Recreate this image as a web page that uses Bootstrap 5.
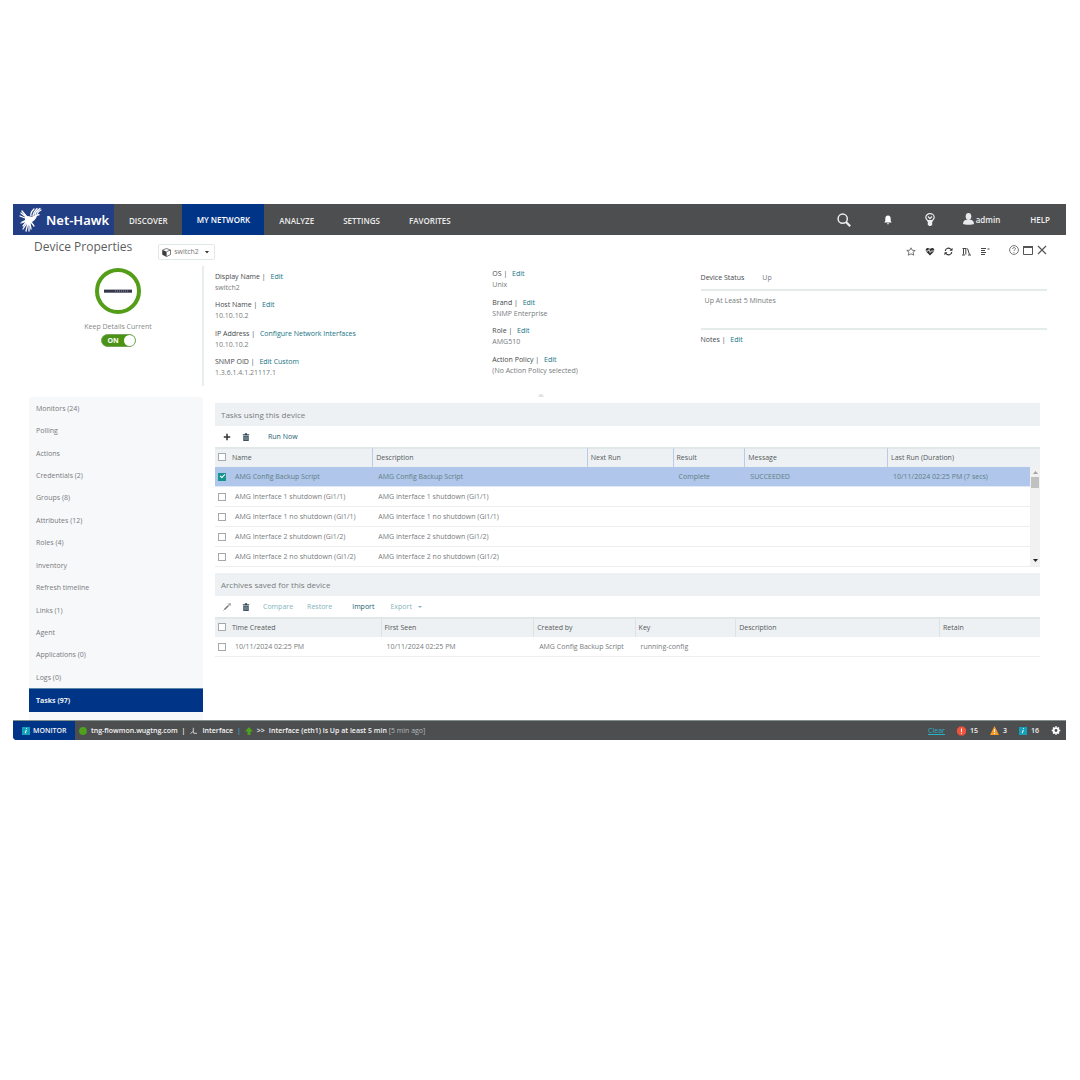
<!DOCTYPE html>
<html lang="en">
<head>
<meta charset="utf-8">
<meta name="viewport" content="width=device-width, initial-scale=1">
<title>Device Properties</title>
<link href="https://cdn.jsdelivr.net/npm/bootstrap@5.3.0/dist/css/bootstrap.min.css" rel="stylesheet">
<style>
body{font-family:"Open Sans","Noto Sans",sans-serif;font-size:7px;line-height:11px;color:#777b7d;background:#fff}
a{text-decoration:none;color:#16707f;font-weight:500}
svg{display:block;flex:none}
.shell{margin:204px 14px 0 13px}
.topbar{background:#4d4e50;height:31px;color:#eee}
.brand{background:#223e84;width:101px;padding-left:6px;gap:4px;color:#fff;font:600 13px/20px "Noto Sans",sans-serif;white-space:nowrap}
.topbar a.menu-item{color:#ececec;font-size:8px;font-weight:600;padding:1px 14px 0 15px;display:flex;align-items:center}
.topbar a.menu-item.current{background:#003487;color:#fff;padding-top:0}
.tools{gap:33px;padding-right:16px}
.tools button,.plain{background:none;border:0;padding:0;color:inherit;font-size:7px;line-height:11px}
.tools .acct{gap:2px;margin:0 -3px 0 -5px;font-size:8px;font-weight:600}
.tools .help{color:#eee;font-size:8px;font-weight:600}
.titlebar{height:31px;padding:0 19px 0 21px}
.titlebar h1{font-size:12px;line-height:16px;margin:4px 26px 0 0;color:#5b5e60;font-weight:400}
.picker{position:relative;border:1px solid #dfe9e9;border-radius:2px;height:16px;width:57px;margin-top:9px}
.picker svg{position:absolute;top:3px;pointer-events:none}
.picker .cube{left:3px}.picker .tri{right:5px;top:6px}
.picker select{appearance:none;border:0;background:transparent;width:100%;height:14px;padding:0 0 0 15px;font-size:7px;line-height:14px;color:#777;display:block}
.acts{gap:9px;padding-top:12px;color:#333}
.wins{gap:4px;margin-left:10px;margin-top:-3px;color:#555}
.info{padding:0 19px 0 16px;min-height:120px}
.side{width:174px}
.badge-col{width:175px;border-right:2px solid #e8eeee;padding-top:2px;padding-left:5px}
.ring{width:46px;height:46px;border:4px solid #549d18;border-radius:50%}
.toggle-label{margin:7px 0 2px;color:#85898b}
.toggle{appearance:none;width:35px;height:13px;border-radius:7px;background:#4a9317;border:1px solid #74a45a;margin:0;display:block;position:relative}
.toggle-wrap{position:relative}
.toggle-wrap span{position:absolute;left:7px;top:1px;font-weight:700;color:#fff;pointer-events:none}
.toggle::after{content:"";position:absolute;right:0;top:0;width:11px;height:11px;border-radius:50%;background:#fff}
.facts{display:grid;grid-template-columns:277fr 208fr 346fr;padding-left:11px}
.facts b{font-weight:500;color:#44484a}
.fa1{padding:5px 0 8px}.fa2{padding:2px 0 10px}.fa3{padding-top:6px}
.state{gap:18px;height:17px}
.rule{border-top:2px solid #e4ebeb}
.fa3 .quiet{height:39px;padding:4px}
.fa3 .notes{padding-top:4px}
.facts a{margin-left:3px;color:#147384}
.body-row{padding-left:16px;margin-top:11px}
.menu{background:#f7f8fa;padding-bottom:8px;height:323px}
.menu a{flex:1 1 0;display:flex;align-items:center;padding-left:7px;color:#777b7d;font-weight:400}
.menu a.current{background:#003487;color:#e8f0f4;font-weight:700;border-top:1px solid #5b86a8}
.main{padding:6px 26px 0 12px;position:relative}
.collapse-tri{position:absolute;left:335px;top:-4px}
.band{background:#edf1f3;height:23px;padding:6px;color:#777c7e}
.band h2{font-size:8px;line-height:11px;font-weight:400;margin:0}
.grid-wrap{margin-bottom:6px}
.bar{height:21px;padding-left:8px;color:#1b6070}
.bar .off{color:#85b3bb}
.bar button{font-weight:500}
.bar .del{margin:0 18px 0 11px;color:#2f4a58}
.bar .del2{margin:0 13px 0 10px;color:#2f4a58}
.bar .rest{margin:0 20px 0 14px}
.bar .exp{gap:6px;margin-left:16px}
table.grid{table-layout:fixed;width:100%;border-collapse:separate;border-spacing:0}
.grid th{background:#edf1f3;color:#55595b;font-weight:500;height:20px;padding:0 0 2px 3px;border-top:2px solid #e0e8e8;border-left:1px solid #dbe3e6}
.grid.blue th{border-left-color:#b9cbe9}
.grid th:first-child,.grid th:nth-child(2){border-left:0}
.grid td{height:20px;padding:0 0 0 6px;border-bottom:1px solid #eceeef;white-space:nowrap}
.grid th:nth-child(2){padding-left:0}.grid td:nth-child(2){padding-left:3px}
.grid th:first-child,.grid td:first-child{padding-left:3px}
.grid tr.sel td{background:#b0c6ea;color:#5f8185;border-bottom-color:#dfe9f8}
.tick{appearance:none;width:8px;height:8px;border:1px solid #a4a9ab;background:#fff;margin:0;display:block}
.tick:checked{background:#16958f;border-color:#16958f;position:relative}
.tick:checked::after{content:"";position:absolute;left:1px;top:0;width:5px;height:3px;border:solid #fff;border-width:0 0 1px 1px;transform:rotate(-45deg)}
.scroller{position:absolute;right:0;top:20px;bottom:1px;width:10px;background:#f1f1f1;padding:4px 0}
.scroller i{width:8px;height:11px;background:#c1c1c1;margin:3px 0 auto}
.statusbar{background:#4d4e50;height:20px;color:#f4f4f4;border-top:1px solid #83908d;border-bottom-left-radius:4px;overflow:hidden;font-weight:600;padding-right:5px}
.mon{background:#003487;width:62px;padding-left:9px;gap:3px;height:100%}
.feed{gap:4px;padding-left:4px}
.feed .ago{color:#b5b8b9;font-weight:500}
.feed .sep{color:#2ab0c9}
.counts{gap:12px}
.counts span{gap:4px}
.statusbar .clear{color:#25b3c8;text-decoration:underline}
</style>
</head>
<body>
<svg width="0" height="0" class="position-absolute"><defs>
<symbol id="note" viewBox="0 0 8 8"><path fill="#13a0bb" d="M0 0h8v8H0z"/><path stroke="#fff" d="M3.3 6.3 4.3 3M4.6 1.2 4.4 2.1"/></symbol>
<symbol id="trash" viewBox="0 0 8 8"><path fill="currentColor" d="M.8 1.2h2.1V.3h2.2v.9h2.1v1H.8zM1.3 2.8h5.4V8H1.3z"/><path stroke="#fff" stroke-width=".4" d="M2.8 3.5v3.7M4 3.5v3.7M5.2 3.5v3.7"/></symbol>
</defs></svg>
<div class="shell">
<header class="topbar d-flex">
  <div class="brand d-flex align-items-center">
    <svg width="23" height="26" viewBox="0 0 23 26" fill="none" stroke="#fff" stroke-width="1.3" stroke-linecap="round">
      <path fill="#fff" stroke="none" d="M6 10 9 9l4 1c2-1 4-3 7-3l1 1-3 1c-1 3-3 5-5 6l-2 2c-2 0-4-1-5-2l-4 0 4-2z"/>
      <path d="M12 9c-1-3 1-5 3-7M14 9c0-3 2-5 4-7.500M16 8c0-3 2-4 5-6.500M18 7c1-2 2-3 4-4M8 10 3 4M7 10 2 6M6 11 1 9M5 15l-3 1M7 15l-3 4M8 16l-4 6M9 16l-2 8M10 16l0 8M11 16l1 6M12 15l3 4"/>
    </svg>Net-Hawk
  </div>
  <nav class="d-flex">
    <a class="menu-item" href="#">DISCOVER</a><a class="menu-item current" href="#">MY NETWORK</a><a class="menu-item" href="#">ANALYZE</a><a class="menu-item" href="#">SETTINGS</a><a class="menu-item" href="#">FAVORITES</a>
  </nav>
  <div class="tools d-flex align-items-center ms-auto">
    <button aria-label="Search"><svg width="14" height="14" viewBox="0 0 14 14" fill="none" stroke="#eee"><circle cx="5.7" cy="5.7" r="4.6" stroke-width="1.5"/><path stroke-width="2.2" d="m9 9 4.2 4.2"/></svg></button>
    <button aria-label="Alerts"><svg width="8" height="10" viewBox="0 0 8 10" fill="#fff"><path d="M4 .5C2 .5 1.3 2 1.3 3.5V6L.3 7.5h7.4L6.7 6V3.5C6.7 2 6 .5 4 .5zM2.9 8.200h2.200L4 9.700z"/></svg></button>
    <button aria-label="Tips"><svg width="10" height="13" viewBox="0 0 10 13"><path fill="none" stroke="#eee" stroke-width="1.2" d="M3 8.500C2.500 7 .8 6.300.8 4.300a4.200 3.700 0 0 1 8.400 0c0 2-1.700 2.700-2.200 4.200M3 3.500l2 2.200 2-2.200"/><path fill="#eee" d="M2.800 7h4.400v4.500L6 13H4l-1.200-1.500z"/></svg></button>
    <button class="acct d-flex align-items-center"><svg width="11" height="13" viewBox="0 0 11 13" fill="#e6eaea"><ellipse cx="5.5" cy="3.5" rx="2.8" ry="3.4"/><path d="M0 11c0-3 2-4 3.500-4.200h4C9 7 11 8 11 11c-1 1-10 1-11 0z"/></svg>admin</button>
    <a href="#" class="help">HELP</a>
  </div>
</header>

<div class="titlebar d-flex align-items-start">
  <h1>Device Properties</h1>
  <div class="picker"><svg class="cube" width="9" height="9" viewBox="0 0 9 9"><path fill="#fff" stroke="#444" stroke-width=".7" d="m.6 2 4-1.500 3.900 1.500v4.500L4.600 8.600.6 6.600z"/><path fill="#3b3b3b" d="m.6 2 4 1.700v4.900l-4-2z"/><path stroke="#444" stroke-width=".7" d="m4.600 3.700 3.900-1.700"/></svg>
    <select aria-label="Device"><option>switch2</option></select>
    <svg class="tri" width="4" height="3" viewBox="0 0 4 3"><path fill="#333" d="M0 0h4L2 2.500z"/></svg></div>
  <div class="acts d-flex align-items-center ms-auto">
    <button class="plain" aria-label="Favorite"><svg width="10" height="9" viewBox="0 0 10 9"><path fill="none" stroke="#555" stroke-width=".8" d="m5 .8 1.200 2.400 3 .3L7 5.200l.8 3L5 6.800 2.200 8.200l.8-3L.8 3.500l3-.3z"/></svg></button>
    <button class="plain" aria-label="Health"><svg width="10" height="9" viewBox="0 0 10 9"><path fill="#333" d="M5 8.500 1.500 5C0 3.500.8 1 2.800 1 4 1 5 2 5 2s1-1 2.200-1c2 0 2.800 2.500 1.300 4z"/><path fill="none" stroke="#fff" stroke-width=".8" d="M.5 4H3l1-1.500L5.200 5.500 6.200 4h3.300"/></svg></button>
    <button class="plain" aria-label="Refresh"><svg width="9" height="9" viewBox="0 0 9 9" fill="none" stroke="#333" stroke-width="1.2"><path d="M1.200 4A3.200 3.200 0 0 1 7 2.500M7.800 5A3.200 3.200 0 0 1 2 6.500"/><path fill="#333" stroke="none" d="M8.500.8v3H5.500zM.5 8.200v-3h3z"/></svg></button>
    <button class="plain" aria-label="Library"><svg width="9" height="9" viewBox="0 0 9 9" fill="none" stroke="#444"><path d="M1.500 1.500v6M3.800 1.500v6M5.500 1.500l2 6M0 8h3M.5 1.500h4M6 8h3"/></svg></button>
    <button class="plain" aria-label="List"><svg width="10" height="9" viewBox="0 0 10 9" fill="none" stroke="#444"><path d="M1 1.500h5M1 3.500h4M1 5.500h5M1 7.500h4M7.500 2h2"/></svg></button>
    <div class="wins d-flex align-items-center">
      <button class="plain" aria-label="Help"><svg width="10" height="10" viewBox="0 0 10 10" fill="none" stroke="#666" stroke-width=".9"><circle cx="5" cy="5" r="4.4"/><path d="M3.600 4c0-2 2.900-1.700 2.900-.3C6.500 4.700 5 4.800 5 6M5 6.900v1"/></svg></button>
      <button class="plain" aria-label="Maximize"><svg width="10" height="9" viewBox="0 0 10 9"><path fill="none" stroke="#555" d="M.5.5h9v8h-9z"/><path fill="#555" d="M0 0h10v2H0z"/></svg></button>
      <button class="plain" aria-label="Close"><svg width="10" height="10" viewBox="0 0 10 10"><path stroke="#555" stroke-width="1.2" d="m1 1 8 8M9 1 1 9"/></svg></button>
    </div>
  </div>
</div>

<section class="info d-flex">
  <div class="badge-col d-flex flex-column align-items-center">
    <div class="ring d-flex align-items-center justify-content-center"><svg width="28" height="4" viewBox="0 0 28 4"><path fill="#aeb1b5" d="M0 0h28v4H0z"/><path fill="#35364a" d="M0 1h28v2.500H0z"/><path stroke="#8b8f9d" stroke-dasharray="1 1" d="M11 2h14"/></svg></div>
    <label class="toggle-label" for="keep">Keep Details Current</label>
    <div class="toggle-wrap"><input class="toggle" type="checkbox" role="switch" id="keep" checked><span>ON</span></div>
  </div>
  <div class="facts flex-fill">
    <div class="fa1 d-flex flex-column justify-content-between">
      <div><b>Display Name |</b> <a href="#">Edit</a><br>switch2</div>
      <div><b>Host Name |</b> <a href="#">Edit</a><br>10.10.10.2</div>
      <div><b>IP Address |</b> <a href="#">Configure Network Interfaces</a><br>10.10.10.2</div>
      <div><b>SNMP OID |</b> <a href="#">Edit Custom</a><br>1.3.6.1.4.1.21117.1</div>
    </div>
    <div class="fa2 d-flex flex-column justify-content-between">
      <div><b>OS |</b> <a href="#">Edit</a><br>Unix</div>
      <div><b>Brand |</b> <a href="#">Edit</a><br>SNMP Enterprise</div>
      <div><b>Role |</b> <a href="#">Edit</a><br>AMG510</div>
      <div><b>Action Policy |</b> <a href="#">Edit</a><br>(No Action Policy selected)</div>
    </div>
    <div class="fa3">
      <div class="state d-flex"><b>Device Status</b><span>Up</span></div>
      <div class="rule quiet">Up At Least 5 Minutes</div>
      <div class="rule notes"><b>Notes |</b> <a href="#">Edit</a></div>
    </div>
  </div>
</section>

<div class="body-row d-flex">
  <nav class="side menu d-flex flex-column flex-shrink-0">
    <a href="#">Monitors (24)</a><a href="#">Polling</a><a href="#">Actions</a><a href="#">Credentials (2)</a><a href="#">Groups (8)</a><a href="#">Attributes (12)</a><a href="#">Roles (4)</a><a href="#">Inventory</a><a href="#">Refresh timeline</a><a href="#">Links (1)</a><a href="#">Agent</a><a href="#">Applications (0)</a><a href="#">Logs (0)</a><a class="current" href="#">Tasks (97)</a>
  </nav>
  <main class="main flex-fill">
    <svg class="collapse-tri" width="6" height="4" viewBox="0 0 6 4"><path fill="#dfe3e3" d="M0 4h6L4 1H2z"/></svg>
    <div class="band"><h2>Tasks using this device</h2></div>
    <div class="bar d-flex align-items-center">
      <button class="plain" aria-label="Add"><svg width="8" height="8" viewBox="0 0 8 8"><path stroke="#333" stroke-width="1.5" d="M4 .8v6.400M.8 4h6.400"/></svg></button>
      <button class="plain del" aria-label="Delete"><svg width="8" height="8"><use href="#trash"/></svg></button>
      <button class="plain">Run Now</button>
    </div>
    <div class="grid-wrap position-relative">
      <table class="grid blue">
        <colgroup><col style="width:17px"><col style="width:17%"><col style="width:26%"><col style="width:10.4%"><col style="width:8.7%"><col style="width:17.3%"><col></colgroup>
        <thead><tr><th><input class="tick" type="checkbox" aria-label="Select all tasks"></th><th>Name</th><th>Description</th><th>Next Run</th><th>Result</th><th>Message</th><th>Last Run (Duration)</th></tr></thead>
        <tbody>
          <tr class="sel"><td><input class="tick" type="checkbox" checked aria-label="Select task"></td><td>AMG Config Backup Script</td><td>AMG Config Backup Script</td><td></td><td>Complete</td><td>SUCCEEDED</td><td>10/11/2024 02:25 PM (7 secs)</td></tr>
          <tr><td><input class="tick" type="checkbox" aria-label="Select task"></td><td>AMG Interface 1 shutdown (Gi1/1)</td><td>AMG Interface 1 shutdown (Gi1/1)</td><td></td><td></td><td></td><td></td></tr>
          <tr><td><input class="tick" type="checkbox" aria-label="Select task"></td><td>AMG Interface 1 no shutdown (Gi1/1)</td><td>AMG Interface 1 no shutdown (Gi1/1)</td><td></td><td></td><td></td><td></td></tr>
          <tr><td><input class="tick" type="checkbox" aria-label="Select task"></td><td>AMG Interface 2 shutdown (Gi1/2)</td><td>AMG Interface 2 shutdown (Gi1/2)</td><td></td><td></td><td></td><td></td></tr>
          <tr><td><input class="tick" type="checkbox" aria-label="Select task"></td><td>AMG Interface 2 no shutdown (Gi1/2)</td><td>AMG Interface 2 no shutdown (Gi1/2)</td><td></td><td></td><td></td><td></td></tr>
        </tbody>
      </table>
      <div class="scroller d-flex flex-column align-items-center"><svg width="5" height="3" viewBox="0 0 5 3"><path fill="#a3a3a3" d="M0 3h5L2.500 0z"/></svg><i></i><svg width="5" height="3" viewBox="0 0 5 3"><path fill="#222" d="M0 0h5L2.500 3z"/></svg></div>
    </div>
    <div class="band"><h2>Archives saved for this device</h2></div>
    <div class="bar d-flex align-items-center">
      <button class="plain" aria-label="Edit"><svg width="9" height="9" viewBox="0 0 9 9"><path stroke="#777" stroke-width="1.5" d="m1.500 7.500 4-4M6.500 2.500l1-1"/><path stroke="#777" stroke-width=".8" d="M5 1.500 7.500 4M.5 8.500l1-1"/></svg></button>
      <button class="plain del2" aria-label="Delete"><svg width="8" height="8"><use href="#trash"/></svg></button>
      <button class="plain off">Compare</button>
      <button class="plain off rest">Restore</button>
      <button class="plain">Import</button>
      <button class="plain off exp d-flex align-items-center">Export <svg width="4" height="2" viewBox="0 0 4 2"><path fill="currentColor" d="M0 0h4L2 2z"/></svg></button>
    </div>
    <table class="grid">
      <colgroup><col style="width:17px"><col style="width:18%"><col style="width:18.5%"><col style="width:12.3%"><col style="width:12.2%"><col style="width:24.7%"><col></colgroup>
      <thead><tr><th><input class="tick" type="checkbox" aria-label="Select all archives"></th><th>Time Created</th><th>First Seen</th><th>Created by</th><th>Key</th><th>Description</th><th>Retain</th></tr></thead>
      <tbody><tr><td><input class="tick" type="checkbox" aria-label="Select archive"></td><td>10/11/2024 02:25 PM</td><td>10/11/2024 02:25 PM</td><td>AMG Config Backup Script</td><td>running-config</td><td></td><td></td></tr></tbody>
    </table>
  </main>
</div>

<footer class="statusbar d-flex align-items-center">
  <div class="mon d-flex align-items-center"><svg width="8" height="8"><use href="#note"/></svg>MONITOR</div>
  <div class="feed d-flex align-items-center">
    <svg width="8" height="8" viewBox="0 0 8 8"><circle cx="4" cy="4" r="3.9" fill="#4fa01c"/></svg><span>tng-flowmon.wugtng.com</span><span>|</span>
    <svg width="9" height="8" viewBox="0 0 9 8" fill="none" stroke="#ddd" stroke-width=".9"><path d="M4.300.8v3.500L1.500 6.500M4.300 4.300l.5 2H8"/></svg><span>Interface</span><span class="sep">|</span>
    <svg width="8" height="8" viewBox="0 0 8 8" fill="#4fa01c"><path d="m4 0 4 4.500H5.500V8h-3V4.500H0z"/></svg><span>&gt;&gt;</span><span>Interface (eth1) is Up at least 5 min <span class="ago">[5 min ago]</span></span>
  </div>
  <div class="counts d-flex align-items-center ms-auto">
    <a class="clear" href="#">Clear</a>
    <span class="d-flex align-items-center"><svg width="9" height="10" viewBox="0 0 9 10"><path fill="#f0523d" d="M2.500.5h4L9 3v4L6.500 9.500h-4L0 7V3z"/><path stroke="#fff" stroke-width="1.1" d="M4.500 2.500v3.300M4.500 6.800v1"/></svg>15</span>
    <span class="d-flex align-items-center"><svg width="9" height="9" viewBox="0 0 9 9"><path fill="#f79a28" d="m4.500 0 4.500 9H0z"/><path stroke="#fff" d="M4.500 3v3M4.500 7v1"/></svg>3</span>
    <span class="d-flex align-items-center"><svg width="8" height="8"><use href="#note"/></svg>16</span>
    <button class="plain" aria-label="Settings"><svg width="10" height="9" viewBox="0 0 9 9"><circle cx="4.5" cy="4.5" r="2.4" fill="none" stroke="#fff" stroke-width="1.9"/><path stroke="#fff" stroke-width="1.6" d="M4.500.2v1.300M4.500 7.500v1.300M.2 4.500h1.300M7.500 4.500h1.300M1.500 1.500l1 1M6.500 6.500l1 1M1.500 7.500l1-1M6.500 2.500l1-1"/></svg></button>
  </div>
</footer>
</div>
<script src="https://cdn.jsdelivr.net/npm/bootstrap@5.3.0/dist/js/bootstrap.bundle.min.js"></script>
</body>
</html>
